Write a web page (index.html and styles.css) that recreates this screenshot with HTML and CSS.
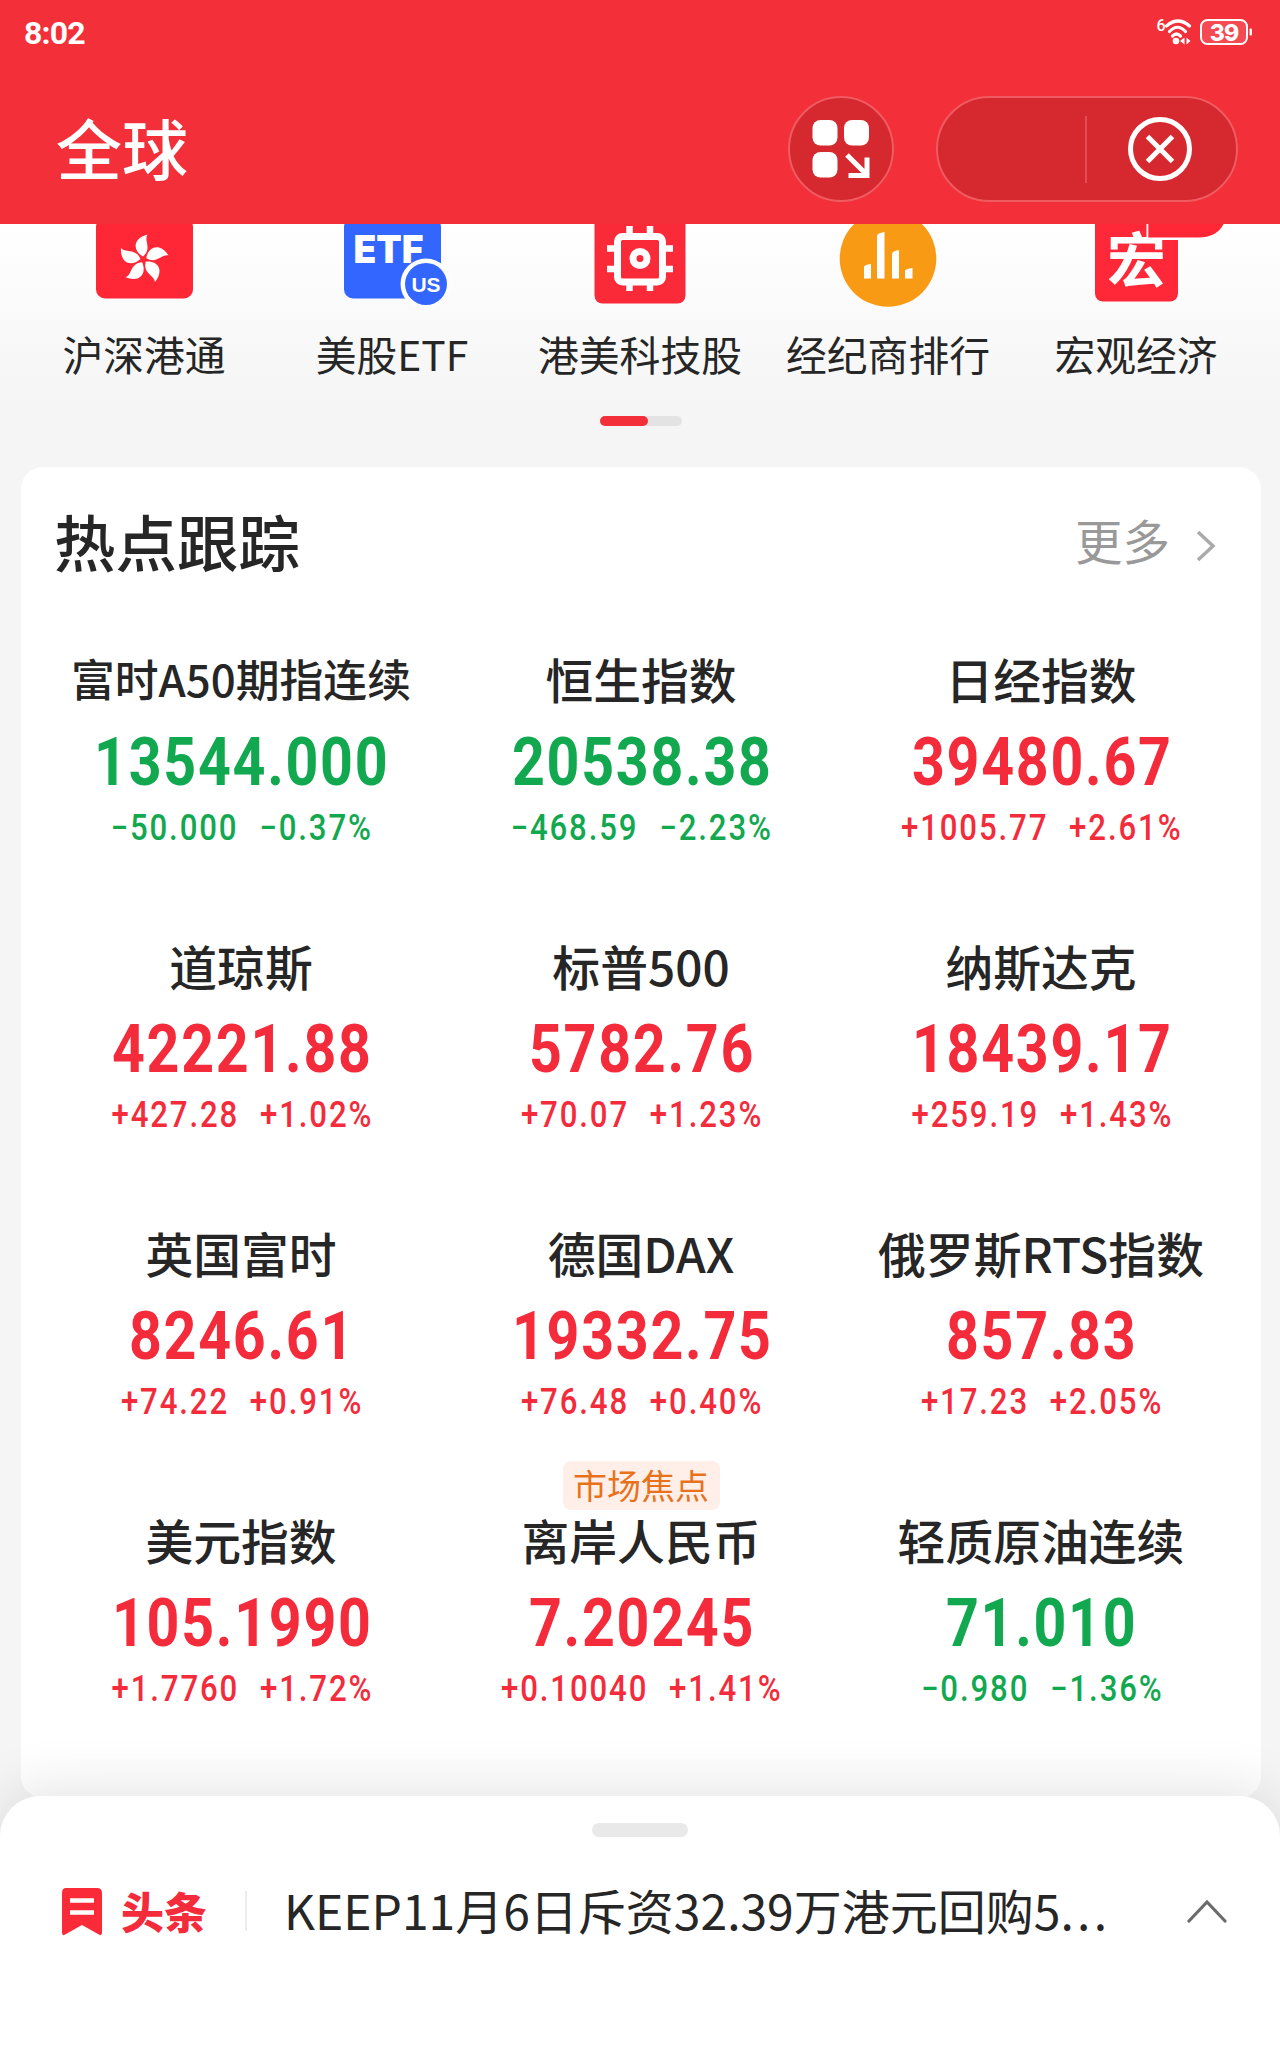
FILE: index.html
```html
<!DOCTYPE html>
<html lang="zh-CN">
<head>
<meta charset="utf-8">
<title>全球</title>
<link rel="stylesheet" href="styles.css">
</head>
<body>
<div class="app">
  <header class="header">
    <div class="status">
      <span class="clock">8:02</span>
      <svg class="status-icons" width="100" height="32" viewBox="1154 16 100 32">
        <text x="1156.500" y="30.500" class="wifi-gen">6</text>
        <g fill="none" stroke="#fff" stroke-width="3.200" stroke-linecap="round">
          <path d="M1166.500 26Q1178 16 1189.500 26"/>
          <path d="M1169.500 31.500Q1177.500 23 1185.500 31.500"/>
          <path d="M1172.500 36Q1176.500 32 1180.500 36"/>
        </g>
        <circle cx="1176" cy="41" r="3.300" fill="#fff"/>
        <path d="M1184.500 37.500v7l-4.500-3.500zM1186.500 37.500v7l4-3.500z" fill="#fff"/>
        <rect x="1201" y="20" width="46" height="24" rx="6.500" fill="#f54a53" stroke="#fff" stroke-width="2"/>
        <rect x="1249.500" y="28.500" width="2.500" height="7" rx="1" fill="#fff"/>
        <text x="1224" y="40.500" class="battery">39</text>
      </svg>
    </div>
    <div class="titlebar">
      <h1 class="title">全球</h1>
      <button class="round" aria-label="应用">
        <svg width="62" height="62" viewBox="810 118 62 62">
          <g fill="#fff"><rect x="812.500" y="120" width="25" height="25.500" rx="8"/><rect x="844" y="120" width="25" height="25.500" rx="8"/><rect x="812.500" y="152" width="25" height="25.500" rx="8"/></g>
          <path d="M847 155l20 20M867 157.500v18h-18.500" fill="none" stroke="#fff" stroke-width="5"/>
        </svg>
      </button>
      <div class="capsule">
        <span class="capsule-menu"></span>
        <span class="capsule-line"></span>
        <svg class="close" width="66" height="66" viewBox="-33 -33 66 66" fill="none" stroke="#fff"><circle r="29.500" stroke-width="5"/><path d="M-12.500-12.500l25 25M12.500-12.500l-25 25" stroke-width="5"/></svg>
      </div>
    </div>
  </header>

  <main class="page">
    <nav class="shortcuts">
      <a class="shortcut">
        <svg width="140" height="86" viewBox="75 224 140 86">
          <rect x="96" y="218" width="97" height="80.500" rx="9" fill="#ff2636"/>
          <g fill="#fff" transform="translate(143.500 259.500)">
            <path d="M-.5-3C-11-9-11-21 4-25C0-19 9-11-.5-3Z"/>
            <path transform="rotate(72)" d="M-.5-3C-11-9-11-21 4-25C0-19 9-11-.5-3Z"/>
            <path transform="rotate(144)" d="M-.5-3C-11-9-11-21 4-25C0-19 9-11-.5-3Z"/>
            <path transform="rotate(216)" d="M-.5-3C-11-9-11-21 4-25C0-19 9-11-.5-3Z"/>
            <path transform="rotate(288)" d="M-.5-3C-11-9-11-21 4-25C0-19 9-11-.5-3Z"/>
          </g>
        </svg>
        <span>沪深港通</span>
      </a>
      <a class="shortcut">
        <svg width="140" height="86" viewBox="323 224 140 86">
          <rect x="344" y="218" width="97" height="80.500" rx="9" fill="#3366ff"/>
          <text x="353.500" y="262.500" class="etf" textLength="70" lengthAdjust="spacingAndGlyphs">ETF</text>
          <circle cx="426" cy="284" r="25.500" fill="#fdfdfd"/>
          <circle cx="426" cy="284" r="21" fill="#3366ff"/>
          <text x="426" y="292" class="us">US</text>
        </svg>
        <span>美股ETF</span>
      </a>
      <a class="shortcut">
        <svg width="140" height="86" viewBox="571 224 140 86">
          <rect x="595.500" y="206" width="91" height="97.500" rx="8" fill="#fb2a38"/>
          <g fill="none" stroke="#fff" stroke-width="7">
            <rect x="618.500" y="236.500" width="45" height="45.500" rx="5"/>
            <path d="M630.500 226v9M651 226v9M630.500 283v8M651 283v8M608 248.500h9M608 269h9M665 248.500h9M665 269h9" stroke-width="6.500"/>
            <circle cx="641" cy="258.500" r="7"/>
          </g>
        </svg>
        <span>港美科技股</span>
      </a>
      <a class="shortcut">
        <svg width="140" height="86" viewBox="819 224 140 86">
          <circle cx="889" cy="258.500" r="48.300" fill="#f99a14"/>
          <path d="M865 267q0-2 7-3v14.500h-7zM878 236q0-3 7.500-4v46.500H878zM893 254q0-3 7-4v28.500h-7zM906 271q0-2 7.500-3v10.500H906z" fill="#fff"/>
        </svg>
        <span>经纪商排行</span>
      </a>
      <a class="shortcut">
        <svg width="140" height="86" viewBox="1067 224 140 86">
          <rect x="1096" y="206" width="83" height="95.500" rx="8" fill="#ff2838"/>
          <text x="1137.500" y="281.500" class="macro">宏</text>
          <path d="M1147.500 220v20h80v-20z" fill="#fff"/>
          <path d="M1149.300 220v17.500h50q21 0 27-17.500z" fill="#ff2636"/>
        </svg>
        <span>宏观经济</span>
      </a>
    </nav>
    <div class="pager"><i></i></div>

    <section class="card">
      <div class="card-head">
        <h2>热点跟踪</h2>
        <a class="more">更多<svg width="20" height="32" viewBox="0 0 20 32"><path d="M2 2L17 16L2 30" fill="none" stroke="#aaa" stroke-width="3.500"/></svg></a>
      </div>
      <div class="indices">
        <div class="cell down"><div class="name small">富时A50期指连续</div><div class="price">13544.000</div><div class="change"><span>−50.000</span><span>−0.37%</span></div></div>
        <div class="cell down"><div class="name">恒生指数</div><div class="price">20538.38</div><div class="change"><span>−468.59</span><span>−2.23%</span></div></div>
        <div class="cell"><div class="name">日经指数</div><div class="price">39480.67</div><div class="change"><span>+1005.77</span><span>+2.61%</span></div></div>
        <div class="cell"><div class="name">道琼斯</div><div class="price">42221.88</div><div class="change"><span>+427.28</span><span>+1.02%</span></div></div>
        <div class="cell"><div class="name">标普500</div><div class="price">5782.76</div><div class="change"><span>+70.07</span><span>+1.23%</span></div></div>
        <div class="cell"><div class="name">纳斯达克</div><div class="price">18439.17</div><div class="change"><span>+259.19</span><span>+1.43%</span></div></div>
        <div class="cell"><div class="name">英国富时</div><div class="price">8246.61</div><div class="change"><span>+74.22</span><span>+0.91%</span></div></div>
        <div class="cell"><div class="name">德国DAX</div><div class="price">19332.75</div><div class="change"><span>+76.48</span><span>+0.40%</span></div></div>
        <div class="cell"><div class="name">俄罗斯RTS指数</div><div class="price">857.83</div><div class="change"><span>+17.23</span><span>+2.05%</span></div></div>
        <div class="cell"><div class="name">美元指数</div><div class="price">105.1990</div><div class="change"><span>+1.7760</span><span>+1.72%</span></div></div>
        <div class="cell"><span class="tag">市场焦点</span><div class="name">离岸人民币</div><div class="price">7.20245</div><div class="change"><span>+0.10040</span><span>+1.41%</span></div></div>
        <div class="cell down"><div class="name">轻质原油连续</div><div class="price">71.010</div><div class="change"><span>−0.980</span><span>−1.36%</span></div></div>
      </div>
    </section>
  </main>

  <footer class="sheet">
    <div class="handle"></div>
    <div class="news">
      <svg width="42" height="48" viewBox="0 0 42 48"><path d="M5 0h31q5 0 5 5v39q0 5-4 2L21 37L5 46q-4 3-4-2V5q0-5 4-5z" fill="#fb2a38"/><path d="M9 12.500h24M9 24.500h24" stroke="#fff" stroke-width="4.500"/></svg>
      <b class="brand">头条</b>
      <i class="rule"></i>
      <span class="headline">KEEP11月6日斥资32.39万港元回购5<em>...</em></span>
      <svg width="40" height="24" viewBox="0 0 40 24"><path d="M2 22L20 3L38 22" fill="none" stroke="#6b6b6b" stroke-width="3.200" stroke-linecap="round"/></svg>
    </div>
  </footer>
</div>
</body>
</html>
```
FILE: styles.css
```css
* { box-sizing: border-box; }
body { margin: 0; background: #f5f5f5; color: #262626; font-family: "Noto Sans CJK SC", sans-serif; }
h1, h2 { margin: 0; font-weight: 500; }
svg { display: block; flex: none; }
.app { width: 1280px; height: 2048px; display: flex; flex-direction: column; overflow: hidden; }

.header { height: 224px; flex: none; background: #f32f39; color: #fff; }
.status { height: 64px; display: flex; justify-content: space-between; padding: 16px 26px 0 24px; }
.clock { font: 700 32px/34px Roboto, sans-serif; letter-spacing: -.8px; }
.wifi-gen { font: 500 16px Roboto, sans-serif; fill: #fff; }
.battery { font: 800 23px Inter, sans-serif; letter-spacing: -1px; fill: #fff; text-anchor: middle; }
.titlebar { display: flex; align-items: center; padding: 32px 42px 0 56px; }
.title { font-size: 66px; line-height: 98px; margin: -7px auto 0 0; }
.round { width: 106px; height: 106px; padding: 0; border: 2px solid #ef5b61; border-radius: 50%; background: #d5292f; display: flex; align-items: center; justify-content: center; margin-right: 42px; }
.capsule { width: 302px; height: 106px; border: 2px solid #ef5b61; border-radius: 53px; background: #d5292f; display: flex; align-items: center; }
.capsule-menu { width: 147px; }
.capsule-line { width: 2px; height: 67px; background: #e34c52; }
.close { margin-left: 40px; }

.page { flex: 1; min-height: 0; display: flex; flex-direction: column; background: linear-gradient(#fff, #f5f5f5 180px); }
.shortcuts { display: grid; grid-template-columns: repeat(5, 248px); padding-left: 20px; }
.shortcut { display: flex; flex-direction: column; align-items: center; font-size: 40.8px; line-height: 60px; white-space: nowrap; }
.shortcut span { margin-top: 14px; }
.shortcut svg { overflow: hidden; }
.shortcut:first-child svg { margin-left: 2px; }
.shortcut:nth-child(2) svg { margin-left: 2px; }
.shortcut:last-child svg { overflow: visible; clip-path: inset(0 -40px 0 0); }
.etf { font: 900 38px Inter, sans-serif; fill: #fff; }
.us { font: 600 21px "Liberation Sans", sans-serif; fill: #fff; text-anchor: middle; }
.macro { font: 700 59px "Noto Sans CJK SC", sans-serif; fill: #fff; text-anchor: middle; }
.pager { width: 82px; height: 10px; margin: 32px 0 0 600px; border-radius: 5px; background: #e3e3e3; }
.pager i { display: block; width: 48px; height: 10px; border-radius: 5px; background: #f32f39; }

.card { width: 1240px; height: 1331px; flex: none; margin: 41px 0 0 21px; background: #fff; border-radius: 22px; }
.card-head { height: 90px; margin-top: 28px; padding: 0 45px 0 33px; display: flex; align-items: center; justify-content: space-between; }
.card-head h2 { margin-top: 1px; font-size: 61.5px; line-height: 90px; }
.more { display: flex; align-items: center; gap: 26px; color: #999; font-size: 47.5px; line-height: 70px; }
.more svg { margin-top: 11px; }
.indices { margin: 63px 0 0 20px; display: grid; grid-template-columns: repeat(3, 400px); row-gap: 87px; }
.cell { height: 200px; display: flex; flex-direction: column; align-items: center; position: relative; color: #f32b3b; white-space: nowrap; }
.cell.down { color: #12a850; }
.name { height: 60px; line-height: 61px; font-size: 47.8px; font-weight: 500; color: #262626; }
.name.small { font-size: 43.8px; }
.price { margin-top: 18px; font: 700 67.5px/72px Roboto, sans-serif; letter-spacing: 2px; margin-right: -2px; transform: scaleX(.85); }
.change { margin-top: 10px; display: flex; gap: 24px; font: 500 36px/40px Roboto, sans-serif; letter-spacing: 2.2px; margin-right: -2px; transform: scaleX(.865); }
.tag { position: absolute; top: -48px; width: 157px; height: 49px; border-radius: 8px; background: #ffefe8; color: #e8721c; font-size: 34px; line-height: 47px; text-align: center; }

.sheet { height: 252px; flex: none; position: relative; background: #fff; border-radius: 40px 40px 0 0; box-shadow: 0 -4px 60px rgba(0, 0, 0, .12); }
.handle { width: 96px; height: 14px; margin: 27px auto 0; border-radius: 7px; background: #e9e9e9; }
.news { display: flex; align-items: center; height: 72px; margin-top: 38px; padding: 0 53px 0 61px; }
.news > svg:first-child { margin-top: 2px; }
.brand { margin: -3px 0 0 18px; font-size: 43px; line-height: 70px; font-weight: 900; color: #f32b3b; }
.rule { width: 2px; height: 40px; margin: 0 37px 0 38px; background: #ececec; }
.headline { flex: 1; margin-top: -5px; font-size: 48px; line-height: 70px; white-space: nowrap; }
.headline em { font-style: normal; letter-spacing: 3.3px; }
```
